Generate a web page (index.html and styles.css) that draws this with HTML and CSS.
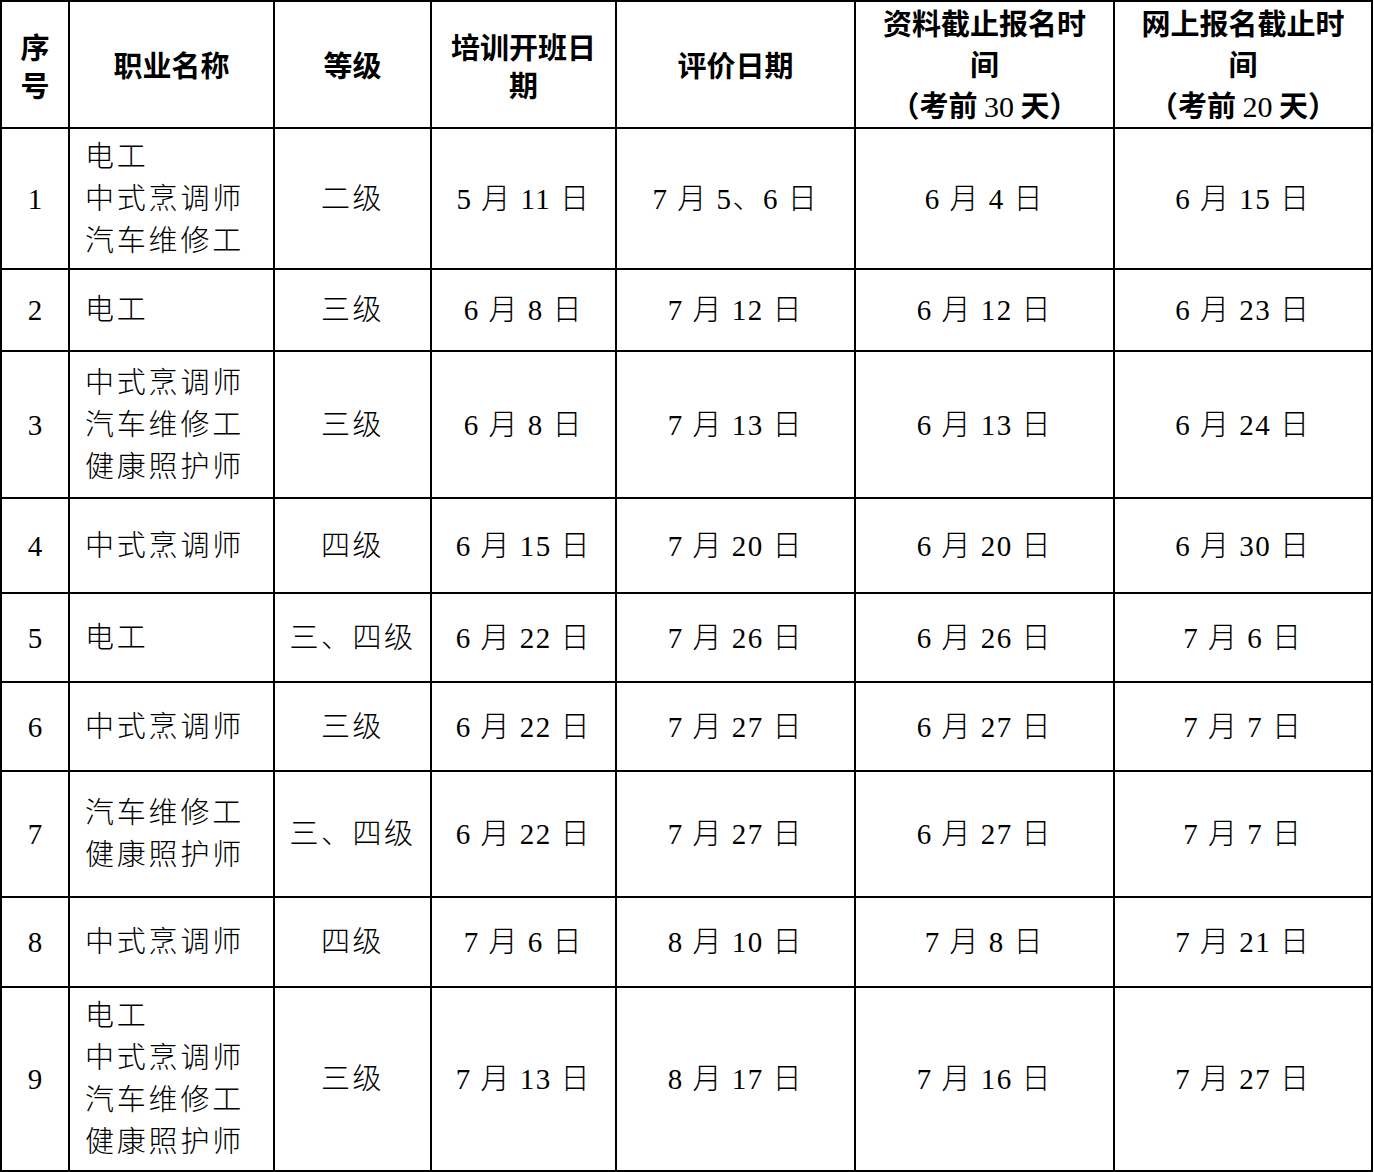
FILE: index.html
```html
<!DOCTYPE html>
<html lang="zh-CN">
<head>
<meta charset="utf-8">
<title>培训评价计划表</title>
<link rel="stylesheet" href="styles.css">
</head>
<body>
<table class="plan">
  <colgroup>
    <col class="c-no">
    <col class="c-name">
    <col class="c-level">
    <col class="c-train">
    <col class="c-eval">
    <col class="c-doc">
    <col class="c-web">
  </colgroup>
  <thead>
    <tr class="r-head">
      <th class="two">序<br>号</th>
      <th>职业名称</th>
      <th>等级</th>
      <th class="two">培训开班日<br>期</th>
      <th>评价日期</th>
      <th class="three">资料截止报名时<br>间<br>（考前 <span class="num">30</span> 天）</th>
      <th class="three">网上报名截止时<br>间<br>（考前 <span class="num">20</span> 天）</th>
    </tr>
  </thead>
  <tbody>
    <tr class="r1">
      <td class="no">1</td>
      <td class="name">电工<br>中式烹调师<br>汽车维修工</td>
      <td class="level">二级</td>
      <td>5 月 11 日</td>
      <td>7 月 5、6 日</td>
      <td>6 月 4 日</td>
      <td>6 月 15 日</td>
    </tr>
    <tr class="r2">
      <td class="no">2</td>
      <td class="name">电工</td>
      <td class="level">三级</td>
      <td>6 月 8 日</td>
      <td>7 月 12 日</td>
      <td>6 月 12 日</td>
      <td>6 月 23 日</td>
    </tr>
    <tr class="r3">
      <td class="no">3</td>
      <td class="name">中式烹调师<br>汽车维修工<br>健康照护师</td>
      <td class="level">三级</td>
      <td>6 月 8 日</td>
      <td>7 月 13 日</td>
      <td>6 月 13 日</td>
      <td>6 月 24 日</td>
    </tr>
    <tr class="r4">
      <td class="no">4</td>
      <td class="name">中式烹调师</td>
      <td class="level">四级</td>
      <td>6 月 15 日</td>
      <td>7 月 20 日</td>
      <td>6 月 20 日</td>
      <td>6 月 30 日</td>
    </tr>
    <tr class="r5">
      <td class="no">5</td>
      <td class="name">电工</td>
      <td class="level">三、四级</td>
      <td>6 月 22 日</td>
      <td>7 月 26 日</td>
      <td>6 月 26 日</td>
      <td>7 月 6 日</td>
    </tr>
    <tr class="r6">
      <td class="no">6</td>
      <td class="name">中式烹调师</td>
      <td class="level">三级</td>
      <td>6 月 22 日</td>
      <td>7 月 27 日</td>
      <td>6 月 27 日</td>
      <td>7 月 7 日</td>
    </tr>
    <tr class="r7">
      <td class="no">7</td>
      <td class="name">汽车维修工<br>健康照护师</td>
      <td class="level">三、四级</td>
      <td>6 月 22 日</td>
      <td>7 月 27 日</td>
      <td>6 月 27 日</td>
      <td>7 月 7 日</td>
    </tr>
    <tr class="r8">
      <td class="no">8</td>
      <td class="name">中式烹调师</td>
      <td class="level">四级</td>
      <td>7 月 6 日</td>
      <td>8 月 10 日</td>
      <td>7 月 8 日</td>
      <td>7 月 21 日</td>
    </tr>
    <tr class="r9">
      <td class="no">9</td>
      <td class="name">电工<br>中式烹调师<br>汽车维修工<br>健康照护师</td>
      <td class="level">三级</td>
      <td>7 月 13 日</td>
      <td>8 月 17 日</td>
      <td>7 月 16 日</td>
      <td>7 月 27 日</td>
    </tr>
  </tbody>
</table>
</body>
</html>
```

FILE: styles.css
```css
html, body {
  margin: 0;
  padding: 0;
  background: #ffffff;
}

body {
  font-family: "Liberation Serif", "Noto Sans CJK SC", serif;
  color: #000000;
}

.plan {
  border-collapse: collapse;
  table-layout: fixed;
  width: 1373px;
}

.c-no { width: 68px; }
.c-name { width: 205px; }
.c-level { width: 157px; }
.c-train { width: 185px; }
.c-eval { width: 239px; }
.c-doc { width: 259px; }
.c-web { width: 258px; }

.plan th,
.plan td {
  border: 2px solid #000000;
  padding: 0;
  text-align: center;
  vertical-align: middle;
}

.plan th {
  font-family: "Noto Sans CJK SC", sans-serif;
  font-weight: 700;
  font-size: 29px;
  line-height: 41px;
}

.plan th.two {
  line-height: 38px;
}

.plan th .num {
  font-family: "Liberation Serif", serif;
  font-weight: 400;
  font-size: 30px;
}

.plan td {
  font-size: 29px;
  font-weight: 300;
  line-height: 42px;
  letter-spacing: 1.5px;
}

.plan td.no {
  letter-spacing: 0;
  font-weight: 400;
}

.plan td.name {
  text-align: left;
  padding-left: 15px;
  letter-spacing: 2.8px;
}

.plan td.level {
  letter-spacing: 2.5px;
}

.r-head { height: 125px; }
.r1 { height: 141px; }
.r2 { height: 82px; }
.r3 { height: 147px; }
.r4 { height: 95px; }
.r5 { height: 89px; }
.r6 { height: 89px; }
.r7 { height: 126px; }
.r8 { height: 90px; }
.r9 { height: 184px; }
```
